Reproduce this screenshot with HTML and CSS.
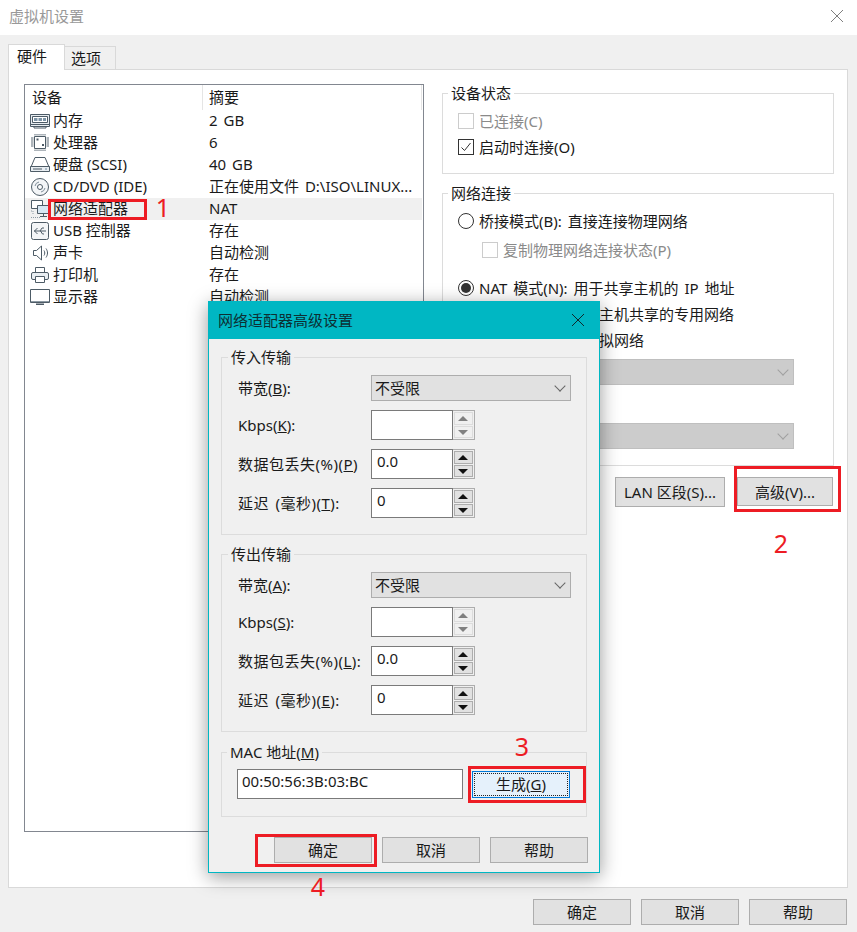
FILE: index.html
```html
<!DOCTYPE html>
<html lang="zh-CN">
<head>
    <meta charset="UTF-8">
    <title>虚拟机设置</title>
    <link rel="stylesheet" href="styles.css">
</head>
<body>
    <div class="window">
        <div class="title-bar">
            <span class="title-text">虚拟机设置</span>
            <svg class="close-icon" width="12" height="12" viewBox="0 0 12 12"><path d="M0 0L12 12M12 0L0 12" stroke="#7f7f7f" fill="none"/></svg>
        </div>

        <div class="tabs">
            <div class="tab active">硬件</div>
            <div class="tab">选项</div>
        </div>

        <div class="panel">
            <div class="device-list">
                <div class="list-head">
                    <div class="head-name">设备</div>
                    <div class="head-value">摘要</div>
                </div>
                <div class="list-row">
                    <div class="row-name">
                        <svg class="row-icon" viewBox="0 0 20 20"><path d="M.5 3.500h19v12h-19z" fill="#e8edf1" stroke="#4d5b66"/><path d="M2.500 5.500h15v6h-15z" fill="#fff" stroke="#4d5b66"/><path d="M4 7h3.500v3H4zM8.500 7H12v3H8.500zM13 7h3v3h-3z" fill="#7d94a6"/><path d="M.5 13.500h19M4 15.500v1.500h12v-1.500" fill="none" stroke="#4d5b66"/></svg>
                        内存
                    </div>
                    <div class="row-value">2 GB</div>
                </div>
                <div class="list-row">
                    <div class="row-name">
                        <svg class="row-icon" viewBox="0 0 20 20"><path d="M4.500 3.500h11v12h-11z" fill="#fff" stroke="#4d5b66"/><path d="M5 1v1.500M7 1v1.500M9 1v1.500M11 1v1.500M13 1v1.500M15 1v1.500M5 16.500V18M7 16.500V18M9 16.500V18M11 16.500V18M13 16.500V18M15 16.500V18M1 5h2.500M1 7h2.500M1 9h2.500M1 11h2.500M1 13h2.500M16.500 5H19M16.500 7H19M16.500 9H19M16.500 11H19M16.500 13H19" stroke="#5d6b76" fill="none"/><path d="M6.500 5.500h2v2h-2zM12 11h2v2h-2z" fill="#4d5b66"/></svg>
                        处理器
                    </div>
                    <div class="row-value">6</div>
                </div>
                <div class="list-row">
                    <div class="row-name">
                        <svg class="row-icon" viewBox="0 0 20 20"><path d="M5 2.500h10l4 9.500H1z" fill="#fff" stroke="#4d5b66"/><path d="M.5 11.500h19v5H.5z" fill="#e8edf1" stroke="#4d5b66"/><path d="M3 14h9" stroke="#4d5b66"/><path d="M15 14h2" stroke="#6f8aa0"/></svg>
                        硬盘 (SCSI)
                    </div>
                    <div class="row-value">40 GB</div>
                </div>
                <div class="list-row">
                    <div class="row-name">
                        <svg class="row-icon" viewBox="0 0 20 20"><circle cx="10" cy="10" r="8.500" fill="#f3f5f7" stroke="#4d5b66"/><circle cx="10" cy="10" r="2.500" fill="#fff" stroke="#4d5b66"/><path d="M5 9a5 5 0 0 1 4-4M15 11a5 5 0 0 1-4 4" fill="none" stroke="#7f8e9a"/></svg>
                        CD/DVD (IDE)
                    </div>
                    <div class="row-value">正在使用文件 D:\ISO\LINUX...</div>
                </div>
                <div class="list-row selected">
                    <div class="row-name">
                        <svg class="row-icon" viewBox="0 0 20 20"><path d="M1.500 1.500h11v8h-11z" fill="#fff" stroke="#4d5b66"/><path d="M7.500 6.500h12v8h-12z" fill="#d6e6f2" stroke="#4d5b66"/><path d="M13.500 14.500v2.500M10 17.500h7" stroke="#4d5b66" fill="none"/><path d="M1 12h1M3 12v3M1 18.500h10" stroke="#8c99a3" stroke-dasharray="1 1" fill="none"/></svg>
                        网络适配器
                    </div>
                    <div class="row-value">NAT</div>
                </div>
                <div class="list-row">
                    <div class="row-name">
                        <svg class="row-icon" viewBox="0 0 20 20"><rect x="1.500" y="1.500" width="17" height="17" rx="2" fill="#f3f5f7" stroke="#4d5b66"/><path d="M4 10h12M7.500 7L4.500 10l3 3M10 10l2-3h2M10.500 10l2 3h1.500" fill="none" stroke="#4d5b66"/></svg>
                        USB 控制器
                    </div>
                    <div class="row-value">存在</div>
                </div>
                <div class="list-row">
                    <div class="row-name">
                        <svg class="row-icon" viewBox="0 0 20 20"><path d="M3.500 7.500h3l5-4.500v14l-5-4.500h-3z" fill="#fff" stroke="#4d5b66"/><path d="M14 7.500c1 1.500 1 3.500 0 5M16 5.500c2 3 2 6 0 9" fill="none" stroke="#4d5b66"/></svg>
                        声卡
                    </div>
                    <div class="row-value">自动检测</div>
                </div>
                <div class="list-row">
                    <div class="row-name">
                        <svg class="row-icon" viewBox="0 0 20 20"><path d="M5.500 7.500v-5h9v5" fill="#fff" stroke="#4d5b66"/><rect x="1.500" y="7.500" width="17" height="7" rx="1.500" fill="#e8edf1" stroke="#4d5b66"/><path d="M5.500 11.500h9v6h-9z" fill="#fff" stroke="#4d5b66"/></svg>
                        打印机
                    </div>
                    <div class="row-value">存在</div>
                </div>
                <div class="list-row">
                    <div class="row-name">
                        <svg class="row-icon" viewBox="0 0 20 20"><path d="M.5 2.500h19v13h-19z" fill="#fff" stroke="#4d5b66"/><path d="M1 14.500h18" stroke="#8c99a3"/><path d="M6 16.500h8V18H6z" fill="#4d5b66"/></svg>
                        显示器
                    </div>
                    <div class="row-value">自动检测</div>
                </div>
            </div>

            <div class="side">
                <fieldset class="group status-group">
                    <legend>设备状态</legend>
                    <div class="option disabled"><span class="check"></span>已连接(C)</div>
                    <div class="option"><span class="check checked"><svg width="14" height="14" viewBox="0 0 14 14"><path d="M2.500 7.500L5.500 10.500L11.500 3" fill="none" stroke="#333"/></svg></span>启动时连接(O)</div>
                </fieldset>

                <fieldset class="group network-group">
                    <legend>网络连接</legend>
                    <div class="option"><span class="radio"></span>桥接模式(B): 直接连接物理网络</div>
                    <div class="option sub disabled"><span class="check"></span>复制物理网络连接状态(P)</div>
                    <div class="option nat"><span class="radio on"></span>NAT 模式(N): 用于共享主机的 IP 地址</div>
                    <div class="option"><span class="radio"></span>仅主机模式(H): 与主机共享的专用网络</div>
                    <div class="option"><span class="radio"></span>自定义(U): 特定虚拟网络</div>
                    <div class="select off net-select"></div>
                    <div class="option sub lan-label">LAN 区段(L):</div>
                    <div class="select off net-select"></div>
                </fieldset>

                <div class="side-buttons">
                    <button class="btn lan-btn">LAN 区段(S)...</button>
                    <button class="btn adv-btn">高级(V)...</button>
                </div>
            </div>
        </div>

        <div class="footer">
            <button class="btn">确定</button>
            <button class="btn">取消</button>
            <button class="btn">帮助</button>
        </div>
    </div>

    <div class="dialog">
        <div class="dialog-title">
            <span>网络适配器高级设置</span>
            <svg width="12" height="12" viewBox="0 0 12 12"><path d="M0 0L12 12M12 0L0 12" stroke="#10282b" fill="none"/></svg>
        </div>
        <div class="dialog-body">
            <fieldset class="group transfer">
                <legend>传入传输</legend>
                <div class="form-row">
                    <label>带宽(<u>B</u>):</label>
                    <div class="select">不受限</div>
                </div>
                <div class="form-row">
                    <label>Kbps(<u>K</u>):</label>
                    <div class="spin off">
                        <div class="spin-input"></div>
                        <div class="spin-btns"><span class="spin-up"></span><span class="spin-down"></span></div>
                    </div>
                </div>
                <div class="form-row">
                    <label class="wide">数据包丢失(%)(<u>P</u>)</label>
                    <div class="spin">
                        <div class="spin-input">0.0</div>
                        <div class="spin-btns"><span class="spin-up"></span><span class="spin-down"></span></div>
                    </div>
                </div>
                <div class="form-row">
                    <label class="wide">延迟 (毫秒)(<u>T</u>):</label>
                    <div class="spin">
                        <div class="spin-input">0</div>
                        <div class="spin-btns"><span class="spin-up"></span><span class="spin-down"></span></div>
                    </div>
                </div>
            </fieldset>

            <fieldset class="group transfer">
                <legend>传出传输</legend>
                <div class="form-row">
                    <label>带宽(<u>A</u>):</label>
                    <div class="select">不受限</div>
                </div>
                <div class="form-row">
                    <label>Kbps(<u>S</u>):</label>
                    <div class="spin off">
                        <div class="spin-input"></div>
                        <div class="spin-btns"><span class="spin-up"></span><span class="spin-down"></span></div>
                    </div>
                </div>
                <div class="form-row">
                    <label class="wide">数据包丢失(%)(<u>L</u>):</label>
                    <div class="spin">
                        <div class="spin-input">0.0</div>
                        <div class="spin-btns"><span class="spin-up"></span><span class="spin-down"></span></div>
                    </div>
                </div>
                <div class="form-row">
                    <label class="wide">延迟 (毫秒)(<u>E</u>):</label>
                    <div class="spin">
                        <div class="spin-input">0</div>
                        <div class="spin-btns"><span class="spin-up"></span><span class="spin-down"></span></div>
                    </div>
                </div>
            </fieldset>

            <fieldset class="group mac">
                <legend>MAC 地址(<u>M</u>)</legend>
                <div class="mac-row">
                    <div class="mac-input">00:50:56:3B:03:BC</div>
                    <button class="btn focus"><span>生成(<u>G</u>)</span></button>
                </div>
            </fieldset>

            <div class="dialog-footer">
                <button class="btn">确定</button>
                <button class="btn">取消</button>
                <button class="btn">帮助</button>
            </div>
        </div>
    </div>

    <!-- red markup drawn on top of the screenshot -->
    <div class="mark box-1"></div>
    <div class="mark box-2"></div>
    <div class="mark box-3"></div>
    <div class="mark box-4"></div>
    <div class="num num-1">1</div>
    <div class="num num-2">2</div>
    <div class="num num-3">3</div>
    <div class="num num-4">4</div>
</body>
</html>
```

FILE: styles.css
```css
* {
    box-sizing: border-box;
}

body {
    margin: 0;
    background-color: #f0f0f0;
    color: #1a1a1a;
    font-family: "Noto Sans", "Noto Sans CJK SC", sans-serif;
    font-size: 15px;
    line-height: 20px;
    overflow: hidden;
}

.window {
    width: 857px;
    height: 932px;
    position: relative;
}

.title-bar {
    height: 35px;
    background-color: white;
    display: flex;
    justify-content: space-between;
    align-items: center;
    padding: 0 14px 3px 9px;
}

.title-text {
    color: #999;
}

.tabs {
    display: flex;
    margin: 9px 0 0 8px;
    height: 25px;
    align-items: flex-end;
}

.tab {
    width: 51px;
    height: 23px;
    padding-left: 6px;
    border: 1px solid #d9d9d9;
    border-bottom: none;
    border-left: none;
    background-color: #f0f0f0;
    line-height: 23px;
}

.tab.active {
    width: 57px;
    height: 26px;
    margin-bottom: -1px;
    padding-left: 8px;
    background-color: white;
    border-left: 1px solid #d9d9d9;
    line-height: 22px;
    position: relative;
    z-index: 1;
}

.panel {
    display: flex;
    width: 840px;
    height: 819px;
    margin-left: 8px;
    padding: 14px 0 0 15px;
    background-color: white;
    border: 1px solid #d9d9d9;
}

.device-list {
    width: 400px;
    height: 748px;
    border: 1px solid #828790;
    flex-shrink: 0;
}

.list-head {
    display: flex;
    height: 25px;
    width: 397px;
    border-right: 1px solid #e5e5e5;
    line-height: 25px;
}

.head-name {
    width: 178px;
    padding-left: 7px;
    border-right: 1px solid #e5e5e5;
}

.head-value {
    padding-left: 6px;
}

.list-row {
    display: flex;
    height: 22px;
    width: 397px;
    line-height: 21px;
}

.list-row.selected {
    background-color: #f0f0f0;
}

.row-name {
    width: 184px;
    height: 21px;
    padding-left: 5px;
    display: flex;
    align-items: center;
    gap: 3px;
}

.row-value {
    word-spacing: 2px;
}

.row-icon {
    width: 20px;
    height: 20px;
    flex-shrink: 0;
}

.side {
    width: 392px;
    margin-left: 18px;
}

.group {
    margin: 0;
    padding: 0;
    min-width: 0;
    border: 1px solid #dcdcdc;
}

.group legend {
    margin-left: -10px;
    padding: 0 3px;
    line-height: 18px;
}

.status-group {
    height: 90px;
    padding: 6px 0 0 15px;
}

.network-group {
    height: 282px;
    margin-top: 10px;
    padding: 6px 0 0 15px;
}

.option {
    display: flex;
    align-items: center;
    height: 26px;
    gap: 5px;
    word-spacing: 2px;
}

.option.disabled {
    color: #8a8a8a;
}

.option.sub {
    margin: 3px 0 0 24px;
}

.option.nat {
    margin-top: 12px;
}

.lan-label {
    height: 29px;
}

.check {
    width: 16px;
    height: 16px;
    border: 1px solid #333;
    display: inline-flex;
    flex-shrink: 0;
}

.disabled .check {
    border-color: #ccc;
}

.radio {
    width: 16px;
    height: 16px;
    border: 1px solid #333;
    border-radius: 50%;
    flex-shrink: 0;
    background-color: white;
    position: relative;
}

.radio.on::after {
    content: "";
    position: absolute;
    left: 2px;
    top: 2px;
    width: 10px;
    height: 10px;
    border-radius: 50%;
    background-color: #333;
}

.select {
    height: 26px;
    background-color: #e1e1e1;
    border: 1px solid #adadad;
    padding-left: 3px;
    line-height: 24px;
    position: relative;
}

.select::after {
    content: "";
    position: absolute;
    right: 6px;
    top: 6px;
    width: 7px;
    height: 7px;
    border-right: 1px solid #666;
    border-bottom: 1px solid #666;
    transform: rotate(45deg);
}

.select.off {
    background-color: #cccccc;
    border-color: #bfbfbf;
}

.select.off::after {
    border-color: #a0a0a0;
}

.net-select {
    margin: 6px 39px 0 24px;
}

.side-buttons {
    display: flex;
    justify-content: flex-end;
    gap: 12px;
    margin: 11px 1px 0 0;
}

.btn {
    width: 98px;
    height: 26px;
    padding: 0;
    background-color: #e1e1e1;
    border: 1px solid #adadad;
    font: inherit;
    color: inherit;
}

.lan-btn {
    width: 110px;
    height: 30px;
}

.adv-btn {
    width: 96px;
    height: 29px;
}

.footer {
    display: flex;
    justify-content: flex-end;
    gap: 10px;
    margin-top: 11px;
    padding-right: 10px;
}

/* advanced settings dialog */
.dialog {
    position: absolute;
    left: 208px;
    top: 301px;
    width: 392px;
    height: 572px;
    background-color: #f0f0f0;
    border: 1px solid #00b7c3;
    border-top: none;
    box-shadow: 0 4px 18px rgba(0, 0, 0, 0.4);
}

.dialog-title {
    height: 38px;
    margin: 0 -1px;
    background-color: #00b7c3;
    color: #0d2f33;
    display: flex;
    justify-content: space-between;
    align-items: center;
    padding: 0 16px 0 10px;
}

.dialog-body {
    padding: 9px 12px 0;
}

.transfer {
    height: 187px;
    padding: 9px 15px 0 16px;
    display: flex;
    flex-direction: column;
    gap: 9px;
}

.transfer + .transfer {
    margin-top: 10px;
}

.form-row {
    display: grid;
    grid-template-columns: 133px 200px;
    align-items: center;
    white-space: nowrap;
}

.form-row label.wide {
    letter-spacing: 0.5px;
    word-spacing: 2px;
}

.spin {
    width: 104px;
    height: 30px;
    display: flex;
    border: 1px solid #adadad;
    background-color: #f0f0f0;
}

.spin-input {
    width: 83px;
    margin: -1px 0 -1px -1px;
    padding-left: 5px;
    background-color: white;
    border: 1px solid #7a7a7a;
    line-height: 22px;
}

.spin-btns {
    display: flex;
    flex-direction: column;
    width: 19px;
    margin: 1px;
    gap: 1px;
}

.spin-up,
.spin-down {
    flex: 1;
    background-color: #e1e1e1;
    border: 1px solid #adadad;
    position: relative;
}

.spin-up::after,
.spin-down::after {
    content: "";
    position: absolute;
    left: 3px;
    top: 3px;
    border-left: 5px solid transparent;
    border-right: 5px solid transparent;
}

.spin-up::after {
    border-bottom: 5px solid #111;
}

.spin-down::after {
    border-top: 5px solid #111;
}

.spin.off .spin-up,
.spin.off .spin-down {
    background-color: #f0f0f0;
    border-color: #dcdcdc;
}

.spin.off .spin-up::after {
    border-bottom-color: #808080;
}

.spin.off .spin-down::after {
    border-top-color: #808080;
}

.mac {
    height: 74px;
    margin-top: 11px;
    padding: 8px 0 0 15px;
}

.mac-row {
    display: flex;
    align-items: center;
    gap: 9px;
}

.mac-input {
    width: 226px;
    height: 30px;
    padding-left: 4px;
    background-color: white;
    border: 1px solid #7a7a7a;
    line-height: 22px;
}

.btn.focus {
    background-color: #e5f1fb;
    border-color: #0078d7;
    height: 27px;
    padding: 1px;
}

.btn.focus span {
    display: block;
    height: 100%;
    border: 1px dotted #222;
    line-height: 21px;
}

.dialog-footer {
    display: flex;
    justify-content: flex-end;
    gap: 10px;
    margin: 20px -1px 0 0;
}

/* annotations */
.mark {
    position: absolute;
    border: 3px solid #ed1c24;
}

.box-1 {
    left: 48px;
    top: 199px;
    width: 99px;
    height: 21px;
}

.box-2 {
    left: 734px;
    top: 466px;
    width: 107px;
    height: 46px;
}

.box-3 {
    left: 468px;
    top: 766px;
    width: 118px;
    height: 37px;
}

.box-4 {
    left: 255px;
    top: 834px;
    width: 122px;
    height: 33px;
}

.num {
    position: absolute;
    color: #ed1c24;
    font-size: 25px;
    font-weight: 400;
    line-height: 30px;
    width: 20px;
    text-align: center;
}

.num-1 {
    left: 153px;
    top: 192px;
}

.num-2 {
    left: 771px;
    top: 528px;
}

.num-3 {
    left: 512px;
    top: 731px;
}

.num-4 {
    left: 308px;
    top: 871px;
}
```
